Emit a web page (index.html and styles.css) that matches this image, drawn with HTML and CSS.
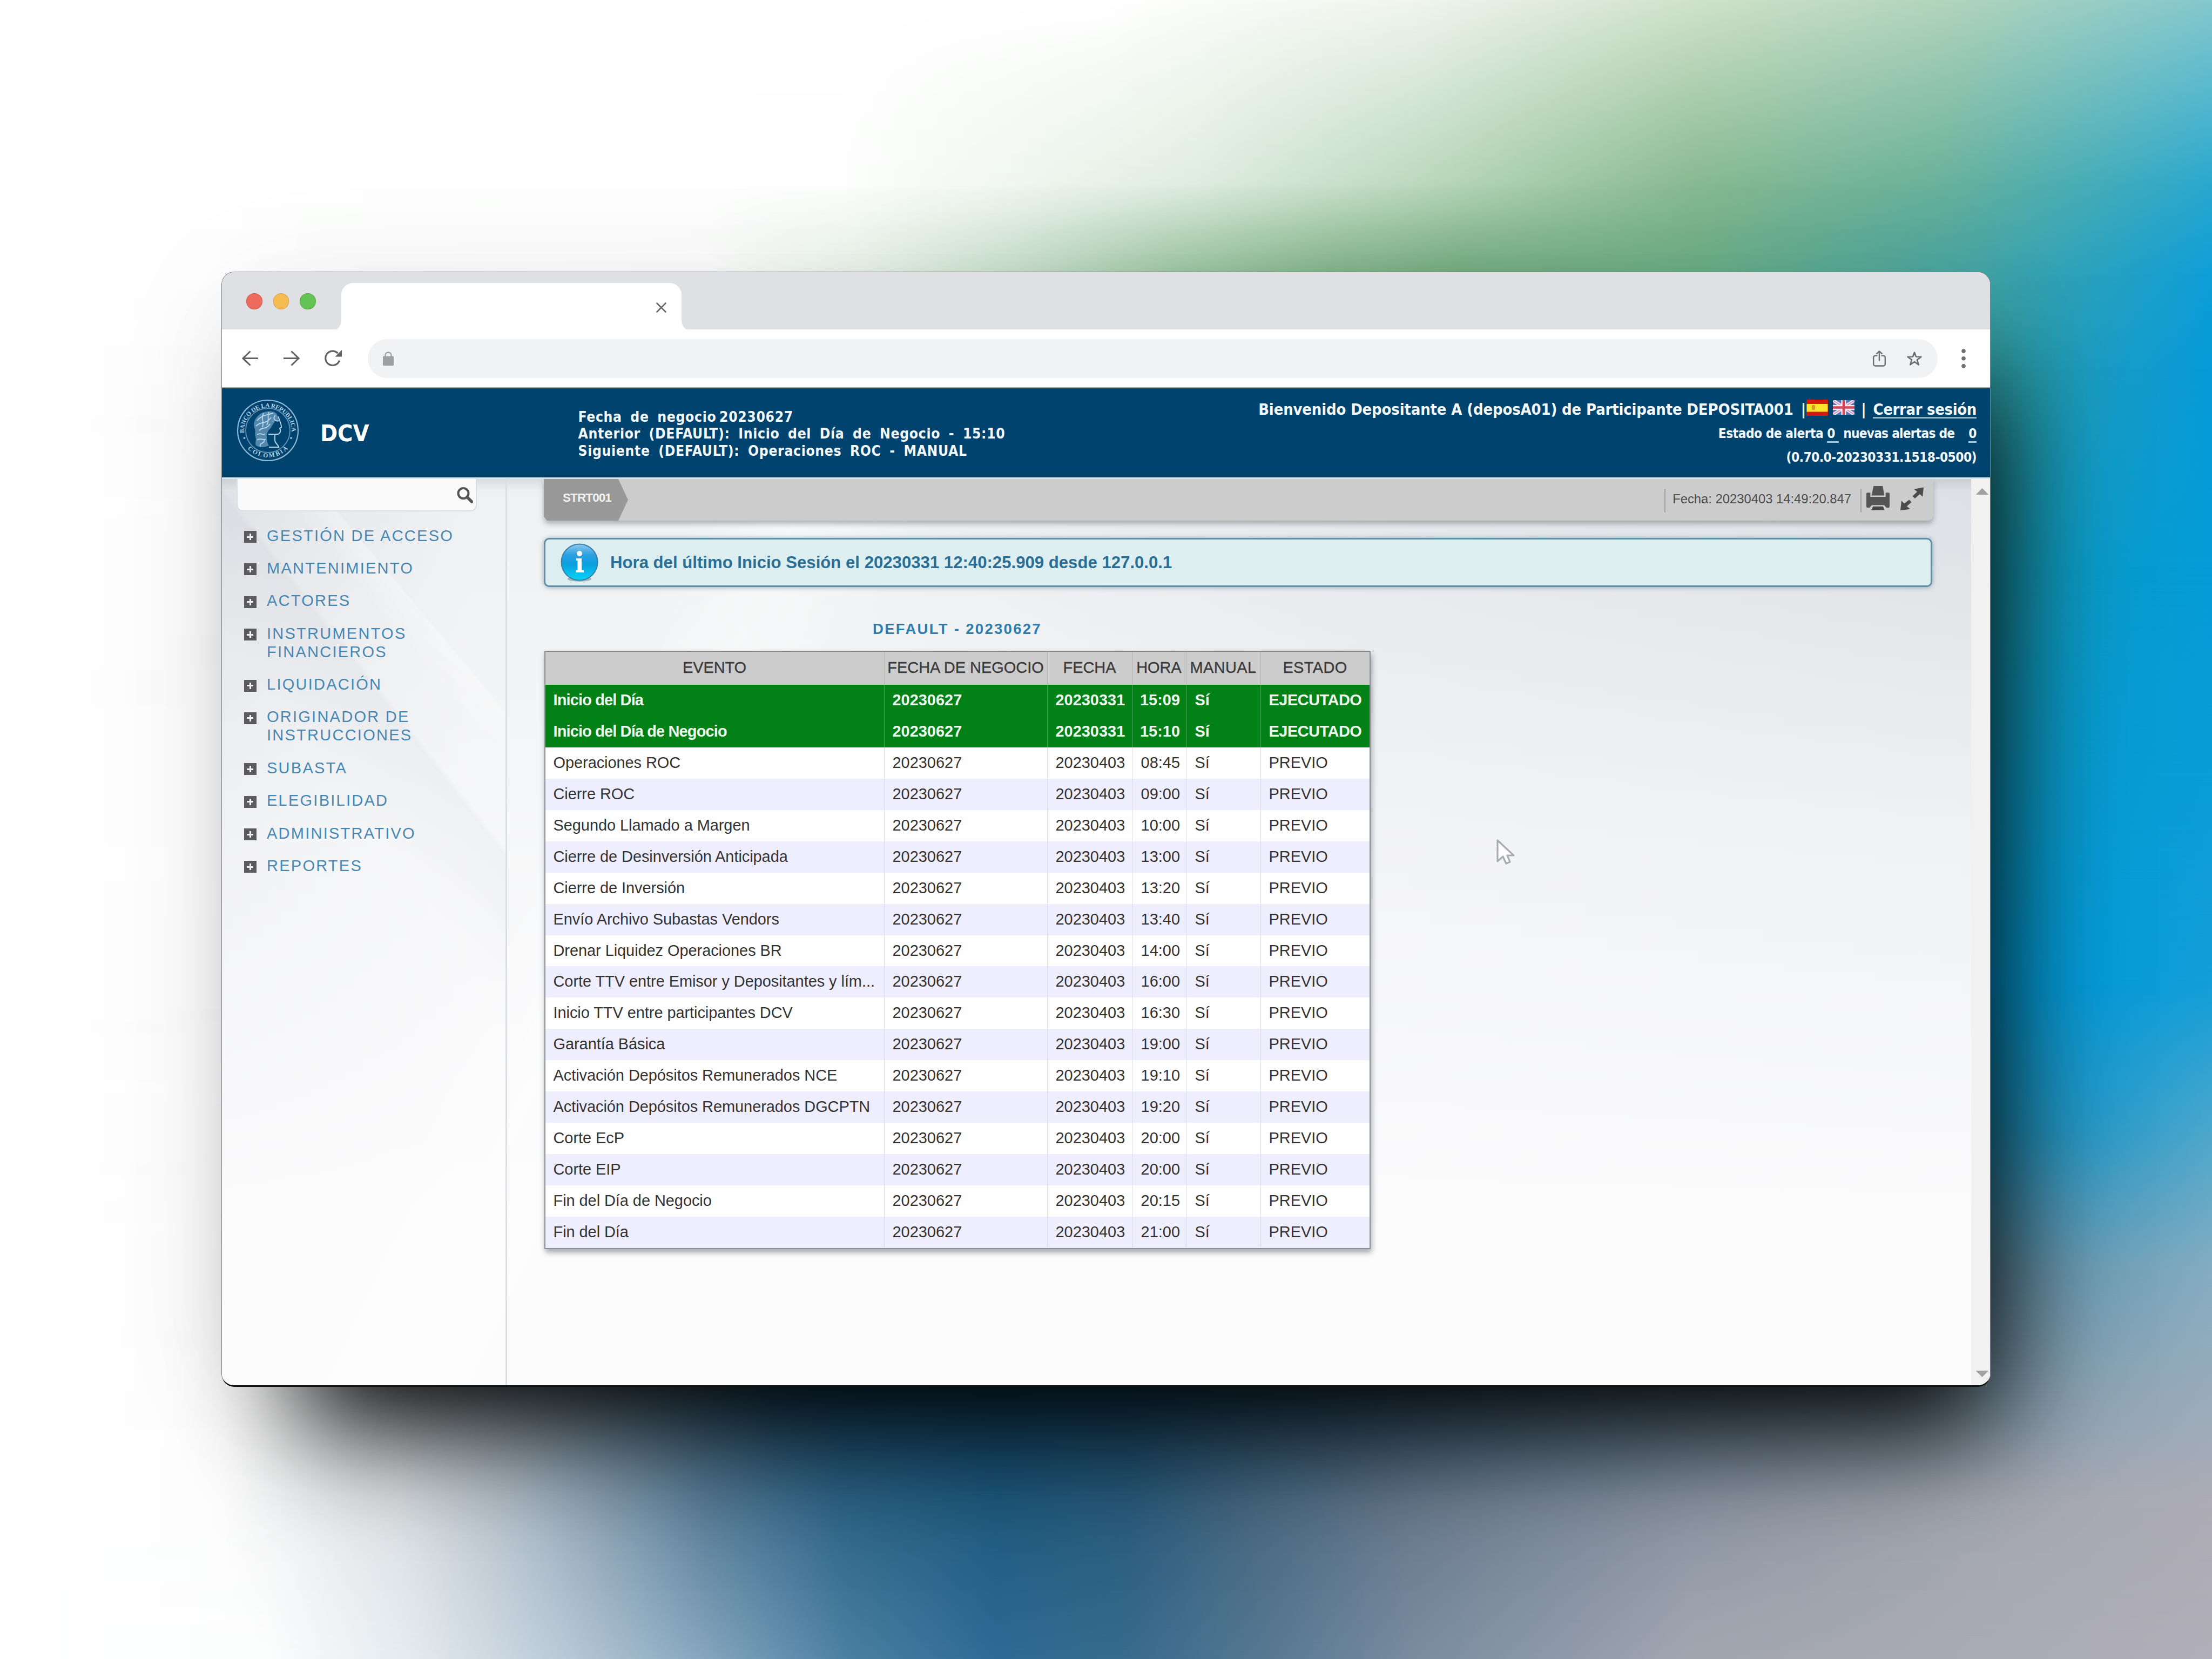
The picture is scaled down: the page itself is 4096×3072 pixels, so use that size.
FILE: index.html
```html
<!DOCTYPE html>
<html lang="es">
<head>
<meta charset="utf-8">
<title>DCV</title>
<link rel="stylesheet" href="styles.css">
</head>
<body>
<div class="stage">
<div class="backdrop">
<i class="band b0"></i><i class="band b1"></i><i class="band b2"></i><i class="band b3"></i><i class="band b4"></i><i class="band b5"></i><i class="band b6"></i><i class="band b7"></i><i class="band b8"></i><i class="band b9"></i>
</div>
<div class="window">
<div class="tabbar">
<div class="dots"><i class="dot red"></i><i class="dot amber"></i><i class="dot green"></i></div>
<div class="tab">
<svg class="foot left" viewBox="0 0 9 18"><path d="M9 0C9 8 6 14 0 18H9Z" fill="#fff"/></svg>
<svg class="close" viewBox="0 0 19 19"><path d="M1.5 1.5 17.5 17.5M17.5 1.5 1.5 17.5" stroke="#666769" stroke-width="2.6" stroke-linecap="round"/></svg>
<svg class="foot right" viewBox="0 0 9 18"><path d="M0 0C0 8 3 14 9 18H0Z" fill="#fff"/></svg>
</div>
</div>
<div class="toolbar">
<svg class="nav" viewBox="0 0 31 29"><path d="M30 14.5H2M15.5 1.5 2 14.5 15.5 27.5" fill="none" stroke="#5f6163" stroke-width="3"/></svg>
<svg class="nav" viewBox="0 0 31 29"><path d="M1 14.5H29M15.5 1.5 29 14.5 15.5 27.5" fill="none" stroke="#5f6163" stroke-width="3"/></svg>
<svg class="nav reload" viewBox="0 0 32 31"><path d="M27.5 19.5A13.2 13.2 0 1 1 24.5 6.2" fill="none" stroke="#5f6163" stroke-width="3.2"/><path d="M32 0V12.5H19.5Z" fill="#5f6163"/></svg>
<div class="omnibox">
<svg class="lock" viewBox="0 0 20 26"><path d="M4.5 10V6.5a5.5 5 0 0 1 11 0V10" fill="none" stroke="#9aa0a6" stroke-width="2.4"/><rect y="8.5" width="20" height="17.5" rx="1.5" fill="#9aa0a6"/></svg>
<svg class="share" viewBox="0 0 24 30"><path d="M7.5 9.6H4.5A3.3 3.3 0 0 0 1.2 13V25A3.3 3.3 0 0 0 4.5 28.5H19.5A3.3 3.3 0 0 0 22.8 25V13A3.3 3.3 0 0 0 19.5 9.6H16.5M12 18.5V2M7.2 6 12 1.5 16.8 6" fill="none" stroke="#6d6e70" stroke-width="2.4" stroke-linecap="round"/></svg>
<svg class="star" viewBox="0 0 28 27"><path d="M14 2.5 17 10.5 26.5 10.7 19 16.3 21.8 25.3 14 20 6.2 25.3 9 16.3 1.5 10.7 11 10.5Z" fill="none" stroke="#6d6e70" stroke-width="2.6" stroke-linejoin="round"/></svg>
</div>
<svg class="more" viewBox="0 0 8 36"><circle cx="4" cy="4" r="3.8"/><circle cx="4" cy="17.8" r="3.8"/><circle cx="4" cy="31.7" r="3.8"/></svg>
</div>
<header class="banner">
<svg class="seal" viewBox="0 0 116 116">
<defs><path id="arcTop" d="M14.5 66A44 44 0 1 1 101.5 66"/><path id="arcBottom" d="M10 76A52 52 0 0 0 106 76"/></defs>
<g fill="none" stroke="#8db9d6"><circle cx="58" cy="58" r="56" stroke-width="2.2"/><circle cx="58" cy="58" r="41" stroke-width="1.8" opacity=".7"/></g>
<text class="sealtext"><textPath href="#arcTop" textLength="143" startOffset="3">BANCO DE LA REPUBLICA</textPath></text>
<text class="sealtext"><textPath href="#arcBottom" textLength="84" startOffset="19">COLOMBIA</textPath></text>
<circle cx="14.5" cy="72" r="2" fill="#8db9d6"/><circle cx="101" cy="72" r="2" fill="#8db9d6"/>
<path d="M38 33C44 24 60 20 70 24C75 26 77 33 78 38C76 40 72 38 70 43C66 48 64 54 60 57C57 61 56 64 56 70C56 78 58 84 60 86C52 90 42 90 36 86C33 80 38 76 35 70C33 64 36 60 33 53C31 45 33 38 38 33Z" fill="#6f9fc0" opacity=".75"/>
<path d="M77 32C80 40 84 50 83 52L80 54C82 58 82 62 77 65H59M71 66V76C71 83 77 83 78 89H60M38 40C46 30 56 30 68 26M36 50C46 40 54 48 64 34M42 58C50 50 54 58 62 46M38 66C46 60 50 70 52 64M38 76C44 70 50 78 54 74M44 88C42 80 50 84 52 76M50 26C44 36 52 42 48 52M60 24C56 34 62 38 56 48M72 30C66 36 72 42 78 40" fill="none" stroke="#b5d6ea" stroke-width="1.9"/>
</svg>
<span class="brand">DCV</span>
<div class="business">
<p>Fecha de negocio <span class="tight">20230627</span></p>
<p>Anterior (DEFAULT): Inicio del Día de Negocio - 15:10</p>
<p>Siguiente (DEFAULT): Operaciones ROC - MANUAL</p>
</div>
<div class="session">
<div class="welcome"><span class="who">Bienvenido Depositante A (deposA01) de Participante DEPOSITA001</span><span class="pipe">|</span>
<svg class="flag" viewBox="0 0 40 30"><rect width="40" height="30" rx="2" fill="#d3180f"/><rect x=".5" y="8" width="39" height="14.5" fill="#fbe62c"/><rect x="10" y="10" width="6" height="9" rx="2" fill="#d99a2a"/></svg>
<svg class="flag uk" viewBox="0 0 40 27"><rect width="40" height="27" rx="2" fill="#5c70b8"/><path d="M0 0 40 27M40 0 0 27" stroke="#e8e4f4" stroke-width="6"/><path d="M0 0 40 27M40 0 0 27" stroke="#d9849c" stroke-width="1.5"/><path d="M20 0V27M0 13.5H40" stroke="#f4eef6" stroke-width="9"/><path d="M20 0V27M0 13.5H40" stroke="#d8465a" stroke-width="4.5"/></svg>
<span class="pipe p2">|</span><a class="logout">Cerrar sesión</a></div>
<div class="alerts"><span>Estado de alerta</span><u class="n1">0&nbsp;</u><span class="fresh">nuevas alertas de</span><u class="n2">0</u></div>
<div class="version">(0.70.0-20230331.1518-0500)</div>
</div>
</header>
<div class="body">
<aside class="sidebar">
<div class="search"><svg viewBox="0 0 30 30"><circle cx="12" cy="11.5" r="9.5" fill="none" stroke="#555" stroke-width="4"/><path d="M19 18.5 27.5 27" stroke="#555" stroke-width="5.5" stroke-linecap="round"/></svg></div>
<ul class="menu">
<li><i class="plus"></i><span>GESTIÓN DE ACCESO</span></li>
<li><i class="plus"></i><span>MANTENIMIENTO</span></li>
<li><i class="plus"></i><span>ACTORES</span></li>
<li><i class="plus"></i><span>INSTRUMENTOS<br>FINANCIEROS</span></li>
<li><i class="plus"></i><span>LIQUIDACIÓN</span></li>
<li><i class="plus"></i><span>ORIGINADOR DE<br>INSTRUCCIONES</span></li>
<li><i class="plus"></i><span>SUBASTA</span></li>
<li><i class="plus"></i><span>ELEGIBILIDAD</span></li>
<li><i class="plus"></i><span>ADMINISTRATIVO</span></li>
<li><i class="plus"></i><span>REPORTES</span></li>
</ul>
</aside>
<main class="content">
<div class="crumbs">
<div class="crumb">STRT001</div>
<div class="stamp">Fecha: 20230403 14:49:20.847</div>
<svg class="printer" viewBox="0 0 44 46"><path d="M13.5 0H31L34 18H10Z" fill="#545454"/><path d="M0 14.5Q0 12.5 2 12.5H7.5V20.5H36.5V12.5H42Q44 12.5 44 14.5V38Q44 41 41 41H38L33.5 36H10.5L6 41H3Q0 41 0 38Z" fill="#545454"/><path d="M12.5 38.5H31.5L34.5 45.5H9.5Z" fill="#4a4a4a"/></svg>
<svg class="expand" viewBox="0 0 46 45"><path d="M45 0 43 18 37.5 13 28 21.5 23.5 17 32.5 8.5 26 3.5ZM0 44.5 2 26 7.5 31 17 24 21.5 28.5 12.5 36.5 19 42Z" fill="#4c4c4c"/></svg>
</div>
<div class="notice">
<svg class="info" viewBox="0 0 70 72"><defs><linearGradient id="ball" x1="0" y1="0" x2="0" y2="1"><stop offset="0" stop-color="#8fc8ee"/><stop offset=".3" stop-color="#2ba0e0"/><stop offset=".55" stop-color="#0b9fe0"/><stop offset="1" stop-color="#06d4f6"/></linearGradient></defs><ellipse cx="35" cy="66" rx="22" ry="5" fill="#5f7f88" opacity=".5"/><circle cx="35" cy="35" r="33.5" fill="url(#ball)" stroke="#3c7fa6" stroke-width="2"/><circle cx="35" cy="19" r="5" fill="#fff"/><path d="M29 28H39V50H43V54H28V50H31.5V32H29Z" fill="#fff"/></svg>
<span>Hora del último Inicio Sesión el 20230331 12:40:25.909 desde 127.0.0.1</span>
</div>
<div class="events">
<h2>DEFAULT - 20230627</h2>
<div class="table">
<div class="row head"><span>EVENTO</span><span>FECHA DE NEGOCIO</span><span>FECHA</span><span>HORA</span><span class="wide">MANUAL</span><span class="wide">ESTADO</span></div>
<div class="row done"><span>Inicio del Día</span><span>20230627</span><span>20230331</span><span>15:09</span><span>Sí</span><span>EJECUTADO</span></div>
<div class="row done"><span>Inicio del Día de Negocio</span><span>20230627</span><span>20230331</span><span>15:10</span><span>Sí</span><span>EJECUTADO</span></div>
<div class="row"><span>Operaciones ROC</span><span>20230627</span><span>20230403</span><span>08:45</span><span>Sí</span><span>PREVIO</span></div>
<div class="row"><span>Cierre ROC</span><span>20230627</span><span>20230403</span><span>09:00</span><span>Sí</span><span>PREVIO</span></div>
<div class="row"><span>Segundo Llamado a Margen</span><span>20230627</span><span>20230403</span><span>10:00</span><span>Sí</span><span>PREVIO</span></div>
<div class="row"><span>Cierre de Desinversión Anticipada</span><span>20230627</span><span>20230403</span><span>13:00</span><span>Sí</span><span>PREVIO</span></div>
<div class="row"><span>Cierre de Inversión</span><span>20230627</span><span>20230403</span><span>13:20</span><span>Sí</span><span>PREVIO</span></div>
<div class="row"><span>Envío Archivo Subastas Vendors</span><span>20230627</span><span>20230403</span><span>13:40</span><span>Sí</span><span>PREVIO</span></div>
<div class="row"><span>Drenar Liquidez Operaciones BR</span><span>20230627</span><span>20230403</span><span>14:00</span><span>Sí</span><span>PREVIO</span></div>
<div class="row"><span>Corte TTV entre Emisor y Depositantes y lím...</span><span>20230627</span><span>20230403</span><span>16:00</span><span>Sí</span><span>PREVIO</span></div>
<div class="row"><span>Inicio TTV entre participantes DCV</span><span>20230627</span><span>20230403</span><span>16:30</span><span>Sí</span><span>PREVIO</span></div>
<div class="row"><span>Garantía Básica</span><span>20230627</span><span>20230403</span><span>19:00</span><span>Sí</span><span>PREVIO</span></div>
<div class="row"><span>Activación Depósitos Remunerados NCE</span><span>20230627</span><span>20230403</span><span>19:10</span><span>Sí</span><span>PREVIO</span></div>
<div class="row"><span>Activación Depósitos Remunerados DGCPTN</span><span>20230627</span><span>20230403</span><span>19:20</span><span>Sí</span><span>PREVIO</span></div>
<div class="row"><span>Corte EcP</span><span>20230627</span><span>20230403</span><span>20:00</span><span>Sí</span><span>PREVIO</span></div>
<div class="row"><span>Corte EIP</span><span>20230627</span><span>20230403</span><span>20:00</span><span>Sí</span><span>PREVIO</span></div>
<div class="row"><span>Fin del Día de Negocio</span><span>20230627</span><span>20230403</span><span>20:15</span><span>Sí</span><span>PREVIO</span></div>
<div class="row"><span>Fin del Día</span><span>20230627</span><span>20230403</span><span>21:00</span><span>Sí</span><span>PREVIO</span></div>
</div>
</div>
</main>
<div class="scrollbar"><i class="up"></i><i class="down"></i></div>
</div>
</div>
<svg class="cursor" viewBox="0 0 34 48"><path d="M2 3V42L12 33 18 46 25 43 20 31H32Z" fill="#fdfdfe" stroke="#aaabae" stroke-width="3.2" stroke-linejoin="round"/></svg>
</div>
</body>
</html>
```
FILE: styles.css
```css
* { box-sizing: border-box; }
body { margin: 0; font-family: "Liberation Sans", Arial, sans-serif; background: #fff; }
p, h2, ul { margin: 0; padding: 0; list-style: none; }
svg { display: block; flex: none; }
.stage { position: relative; width: 4096px; height: 3072px; overflow: hidden; padding: 503px 410px 0; }

/* colour mesh: every band fades in over the one above */
.backdrop { position: absolute; inset: 0; }
.band { position: absolute; left: 0; right: 0; bottom: 0; }
.b0 { top: 0; background: linear-gradient(90deg, #fff 0, #fff 50%, #f0f5ed 64%, #d0e2cc 76.5%, #b2d4bb 88%, #84c8cd 100%); }
.b1 { top: 0; --h: 340px; background: linear-gradient(90deg, #fff 0, #fdfefd 38%, #f0f6f0 46%, #dfecdf 54%, #bcd8bf 64%, #88b991 76.5%, #68b19b 88%, #29a8cf 100%); }
.b2 { top: 340px; --h: 170px; background: linear-gradient(90deg, #fff 0, #fbfcfb 32%, #e6f1e7 39%, #c6dec9 46%, #9dc6a4 53%, #82b48a 60%, #72ab7e 66%, #68ac85 77%, #45a4a3 89%, #0d9ed8 100%); }
.b3 { top: 510px; --h: 170px; background: linear-gradient(90deg, #fff 0, #fcfcfc 10%, #fcfcfc 80%, #3a9c98 88%, #2c9ca6 91%, #1a9cc4 95%, #069ad9 100%); }
.b4 { top: 680px; --h: 365px; background: linear-gradient(90deg, #fff 0, #fcfcfc 10%, #fcfcfc 80%, #1a96a8 90%, #0a9bca 95%, #049bd9 100%); }
.b5 { top: 1045px; --h: 780px; background: linear-gradient(90deg, #fff 0, #fcfcfc 10%, #fcfcfc 80%, #069ad2 90%, #069bd9 95%, #129ed8 100%); }
.b6 { top: 1825px; --h: 265px; background: linear-gradient(90deg, #fff 0, #fcfcfc 10%, #f4f6f8 18%, #0c4468 30%, #0c4468 60%, #1e8fb8 90%, #2a9bc9 95%, #4ba7cc 100%); }
.b7 { top: 2090px; --h: 260px; background: linear-gradient(90deg, #fff 0, #fcfcfc 12%, #e6eaee 18%, #0c4468 35%, #0c4468 60%, #5f8ba0 90%, #6f9fb6 95%, #84acc1 100%); }
.b8 { top: 2350px; --h: 440px; background: linear-gradient(90deg, #fff 0, #fdfdfd 10%, #dfe3e6 18%, #aebcc8 24%, #5a7f9a 32%, #2f6689 38%, #1f5b80 45%, #2a5c7d 51%, #4a6a82 57%, #6a7b8f 64%, #8d97a4 76.5%, #a4a8b2 89%, #adabb5 100%); }
.b9 { top: 2790px; --h: 282px; background: linear-gradient(90deg, #fff 0, #fcfdfd 12%, #e2e8ed 19%, #b9c9d6 25.5%, #84a5bd 32%, #4a7fa2 38.5%, #2d6b94 45%, #386b8d 51%, #587992 57.5%, #7a8ca0 64%, #a2a6b1 76.5%, #b0aeb8 100%); }
.band:not(.b0) { -webkit-mask-image: linear-gradient(180deg, transparent 0, #000 var(--h)); mask-image: linear-gradient(180deg, transparent 0, #000 var(--h)); }
.backdrop::after { content: ""; position: absolute; left: 410px; top: 503px; width: 3276px; height: 2064px; border-radius: 24px; box-shadow: 75px 145px 200px -65px #000, 0 20px 240px rgba(0, 0, 0, .06); }

.window { position: relative; width: 3276px; height: 2065px; border-radius: 24px; background: #fff; display: flex; flex-direction: column; overflow: hidden; border: 1.5px solid #7d8184; border-bottom: 3px solid #111; }

.tabbar { height: 106px; background: #dee0e3; display: flex; align-items: flex-start; }
.dots { display: flex; gap: 20px; padding: 39px 0 0 45px; width: 221px; }
.dot { width: 29.5px; height: 29.5px; border-radius: 50%; border: 1.5px solid rgba(120, 60, 20, .22); }
.red { background: #ee6a5f; }
.amber { background: #f5bd4f; }
.green { background: #61c454; }
.tab { position: relative; width: 630px; height: 86px; margin-top: 20px; background: #fff; border-radius: 22px 22px 0 0; display: flex; justify-content: flex-end; padding: 36px 28px 0 0; }
.close { width: 19px; height: 19px; }
.foot { position: absolute; bottom: 0; width: 9px; height: 18px; }
.foot.left { left: -9px; }
.foot.right { right: -9px; }

.toolbar { height: 109px; background: #fff; border-bottom: 2px solid #9fa9b0; display: flex; align-items: center; padding-left: 36.5px; }
.nav { width: 31px; height: 29px; margin-right: 45.5px; }
.reload { width: 32px; height: 31px; margin-right: 48px; }
.omnibox { width: 2907px; height: 72px; border-radius: 36px; background: #f0f2f3; display: flex; align-items: center; padding: 0 29px 0 28px; }
.lock { width: 20px; height: 26px; }
.share { width: 24px; height: 30px; margin-left: auto; }
.star { width: 28px; height: 27px; margin-left: 39px; }
.more { width: 8px; height: 36px; margin-left: 44px; fill: #6d6e70; }

.banner { height: 165px; background: linear-gradient(180deg, #00436f 0, #00436f 94%, #093f5f 100%); color: #f2f8fc; display: flex; align-items: flex-start; font-family: "DejaVu Sans Condensed", "DejaVu Sans", sans-serif; font-stretch: condensed; font-weight: bold; white-space: nowrap; }
.seal { width: 116px; height: 116px; margin: 20px 0 0 27px; }
.sealtext { font: bold 11.5px "Liberation Serif", serif; fill: #b5d6ea; }
.brand { font-size: 43px; line-height: 50px; margin: 58px 0 0 39px; color: #fff; }
.business { margin: 37.5px 0 0 387px; font-size: 26.3px; line-height: 31.6px; letter-spacing: .65px; word-spacing: 6.8px; }
.tight { margin-left: -10px; }
.session { flex: 1; text-align: right; padding: 21px 25px 0 0; }
.welcome { display: flex; justify-content: flex-end; align-items: flex-start; font-size: 28.95px; line-height: 36px; letter-spacing: -.15px; }
.pipe { margin-left: 14px; }
.flag { width: 40px; height: 30px; margin: 0 9px 0 1px; }
.flag.uk { height: 27px; margin: 1px 13px 0 0; }
.pipe.p2 { margin: 0 13px 0 -1px; }
.logout { border-bottom: 3.5px solid #8fb6c2; height: 35px; letter-spacing: -.34px; }
.alerts { display: flex; justify-content: flex-end; font-size: 24.3px; line-height: 30px; margin-top: 12px; letter-spacing: -.5px; }
.alerts u { text-decoration: none; border-bottom: 3.5px solid #a3c4d2; height: 32px; }
.fresh { letter-spacing: -.8px; }
.n1 { margin: 0 8px 0 7px; }
.n2 { margin-left: 26px; }
.version { font-size: 24.3px; line-height: 30px; margin-top: 12px; letter-spacing: -.55px; }

.body { flex: 1; display: flex; border-top: 3px solid #d9e9f2; background:
  linear-gradient(180deg, rgba(90, 100, 110, .14) 0, transparent 22px),
  linear-gradient(50deg, transparent 0 60%, rgba(255, 255, 255, .3) 67%, transparent 67.5%) 0 0 / 528px 700px no-repeat,
  linear-gradient(52deg, rgba(120, 130, 145, 0) 0 42%, rgba(120, 130, 145, .06) 58%, rgba(120, 130, 145, 0) 59%) 0 0 / 528px 1000px no-repeat,
  linear-gradient(115deg, transparent 22%, rgba(255, 255, 255, .4) 27%, transparent 33%),
  linear-gradient(180deg, rgba(252, 252, 253, 0) 0, rgba(252, 252, 253, .65) 42%, #fcfcfd 85%),
  linear-gradient(90deg, #e0e2e6 0, #eff0f2 14%, #eef0f1 35%, #e4e6ea 65%, #dcdfe3 100%); }
.sidebar { width: 528px; border-right: 3px solid #dcdee0; }
.search { margin-left: 27px; width: 445px; height: 60px; background: #fafafa; border: 2px solid #dcdee0; border-top: 0; border-radius: 0 0 12px 12px; display: flex; justify-content: flex-end; padding: 15px 5px 0 0; }
.search svg { width: 30px; height: 30px; }
.menu { padding: 28.5px 0 0 41px; display: flex; flex-direction: column; gap: 26.5px; color: #4787b3; font-size: 29px; line-height: 33.9px; letter-spacing: 2.25px; }
.menu li { display: flex; gap: 19.5px; }
.plus { flex: none; width: 22.5px; height: 22px; margin-top: 7.5px; background: linear-gradient(#f2f2f2, #f2f2f2) center / 12px 3px no-repeat, linear-gradient(#f2f2f2, #f2f2f2) center / 3px 12px no-repeat, #5b5b5d; }
.content { flex: 1; padding-left: 68px; }
.crumbs { width: 2573px; height: 77px; background: #ccc; border-radius: 0 0 10px 10px; box-shadow: 0 6px 10px rgba(70, 75, 85, .38); display: flex; align-items: flex-start; }
.crumb { width: 156px; height: 77px; background: #999; clip-path: polygon(0 0, 138px 0, 100% 50%, 138px 100%, 6px 100%, 0 90%); color: #f1f1f1; font-weight: bold; font-size: 22.5px; line-height: 28px; letter-spacing: -.9px; padding: 20.5px 0 0 35px; }
.stamp { margin: 18px 0 0 auto; height: 44px; border: solid #a2a2a2; border-width: 0 2px; padding: 0 17px 0 13px; font-size: 23.8px; line-height: 37px; color: #4c4c4c; white-space: nowrap; }
.printer { width: 43px; height: 45px; margin: 12.5px 0 0 9px; }
.expand { width: 44px; height: 44px; margin: 15px 17px 0 20px; }
.notice { margin-top: 32px; width: 2571px; height: 91px; border: 3px solid #5f8fa9; border-radius: 10px; background: #dceeef; box-shadow: 0 1px 8px rgba(70, 110, 135, .5); display: flex; align-items: center; padding-left: 28px; gap: 22px; color: #2a6e95; font-weight: bold; font-size: 31.15px; white-space: nowrap; }
.info { width: 70px; height: 72px; }
.events { width: 1530px; margin-left: .5px; }
h2 { margin: 61px 0 23px; text-align: center; font-size: 27.5px; line-height: 34px; letter-spacing: 2.3px; color: #2c7cae; }
.table { border: 2px solid #8e8f94; border-top-color: #858585; box-shadow: 2px 6px 10px rgba(60, 65, 75, .45); background: #fff; font-size: 28.95px; color: #333; }
.row { display: grid; grid-template-columns: 628px 302px 157px 100px 138px 1fr; height: 57.94px; align-items: stretch; line-height: 56px; white-space: nowrap; }
.row > span { padding-left: 15px; border-right: 1.5px solid #dcdce4; }
.row > span:first-child { padding-left: 15px; letter-spacing: -.05px; }
.row > span:last-child { border-right: 0; }
.row > span:nth-child(4) { padding: 0 10.5px 0 0; text-align: right; }
.row > span:nth-child(5) { padding-left: 16px; }
.row:nth-child(even) { background: #fefefe; }
.row:nth-child(odd) { background: #eef; }
.row.head { height: 61px; background: #ccc; line-height: 59px; color: #3a3a3a; -webkit-text-stroke: .4px #3a3a3a; }
.row.head > span { padding: 0; text-align: center; border-color: #b5b5b5; }
.row.head > .wide { letter-spacing: .4px; }
.row.done { background: #018116; color: #eef8ee; font-weight: bold; }
.row.done > span { border-color: #4aa35a; }
.row.done > span:first-child { letter-spacing: -.85px; }
.row.done > span:last-child { letter-spacing: -.5px; }
.scrollbar { width: 35px; background: #f1f1f1; display: flex; flex-direction: column; justify-content: space-between; align-items: center; padding: 17px 0 15px 6px; }
.up, .down { width: 24px; height: 12px; background: #a0a0a0; clip-path: polygon(50% 0, 100% 100%, 0 100%); }
.down { clip-path: polygon(0 0, 100% 0, 50% 100%); }
.cursor { position: absolute; left: 2771px; top: 1553px; width: 34px; height: 48px; }
```
